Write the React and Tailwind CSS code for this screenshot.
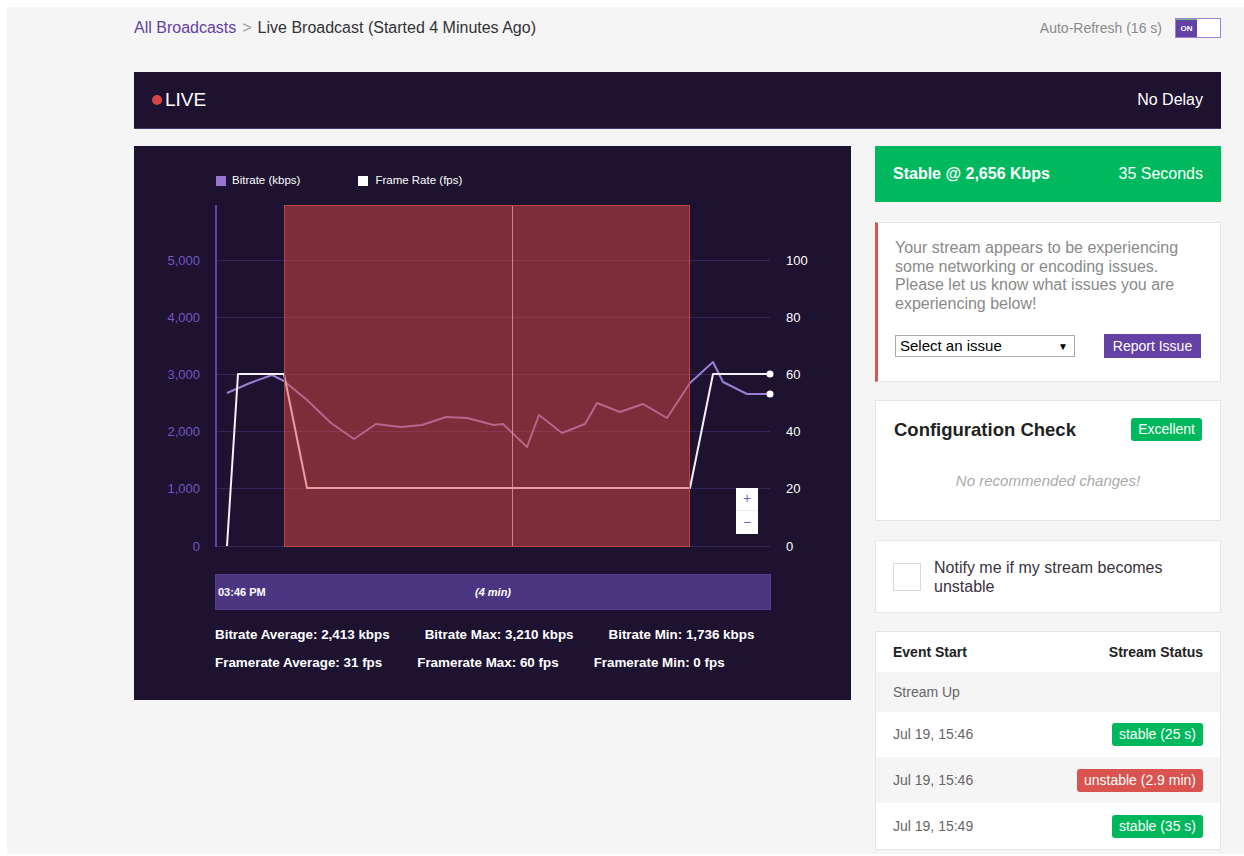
import React from 'react'

// chart coordinates are in px inside the 717x360 plot svg
const GRID_Y = [64, 121, 178, 235, 292, 350]
const LEFT_TICKS = ['5,000', '4,000', '3,000', '2,000', '1,000', '0']
const RIGHT_TICKS = ['100', '80', '60', '40', '20', '0']

const FRAMERATE = [
  [93, 350], [104, 178], [150, 178], [173, 292], [556, 292], [579, 178], [636, 178],
]

const BITRATE = [
  [93, 197], [116, 187], [138, 179], [150, 185], [173, 204], [197, 227], [220, 243],
  [242, 228], [267, 231], [288, 229], [312, 221], [333, 222], [360, 229], [369, 228],
  [393, 251], [405, 219], [428, 237], [451, 228], [463, 207], [486, 216], [509, 208],
  [533, 222], [556, 187], [579, 166], [589, 186], [613, 198], [636, 198],
]

const STATS = [
  ['Bitrate Average: 2,413 kbps', 'Bitrate Max: 3,210 kbps', 'Bitrate Min: 1,736 kbps'],
  ['Framerate Average: 31 fps', 'Framerate Max: 60 fps', 'Framerate Min: 0 fps'],
]

const EVENTS = [
  { time: 'Jul 19, 15:46', label: 'stable (25 s)', ok: true, h: 'h-[45px]', bg: 'bg-white' },
  { time: 'Jul 19, 15:46', label: 'unstable (2.9 min)', ok: false, h: 'h-[46px]', bg: 'bg-[#f5f5f5]' },
  { time: 'Jul 19, 15:49', label: 'stable (35 s)', ok: true, h: 'h-[46px]', bg: 'bg-white' },
]

const pts = (arr) => arr.map((p) => p.join(',')).join(' ')

function Chart() {
  return (
    <svg width="717" height="360" className="block" style={{ fontFamily: '"Liberation Sans", Arial, sans-serif' }}>
      {/* grid */}
      {GRID_Y.map((y, i) => (
        <g key={y}>
          <line x1="82" x2="636" y1={y + 0.5} y2={y + 0.5} stroke="#34265a" strokeWidth="1" />
          <text x="66" y={y + 5} textAnchor="end" fontSize="13" fill="#7356c2">{LEFT_TICKS[i]}</text>
          <text x="652" y={y + 5} fontSize="13" fill="#ffffff">{RIGHT_TICKS[i]}</text>
        </g>
      ))}
      <line x1="82" x2="82" y1="9" y2="351" stroke="#6441a5" strokeWidth="2" />

      {/* series */}
      <polyline points={pts(BITRATE)} fill="none" stroke="#9b7dd4" strokeWidth="2" strokeLinejoin="round" />
      <polyline points={pts(FRAMERATE)} fill="none" stroke="#f4f1f8" strokeWidth="2" strokeLinejoin="round" />
      <circle cx="636" cy="178" r="3.5" fill="#ffffff" />
      <circle cx="636" cy="198" r="3.5" fill="#ffffff" />

      {/* unstable window */}
      <rect x="150.5" y="9.5" width="405" height="341" fill="#d94a43" fillOpacity="0.5" stroke="#c8474a" strokeOpacity="0.9" />
      <line x1="378.5" x2="378.5" y1="10" y2="350" stroke="#e49aa6" strokeOpacity="0.8" strokeWidth="1" />

      {/* zoom buttons */}
      <rect x="602" y="292" width="22" height="46" fill="#ffffff" />
      <line x1="602" x2="624" y1="314.5" y2="314.5" stroke="#ececec" />
      <text x="613" y="307" textAnchor="middle" fontSize="14" fill="#7c5cc4">+</text>
      <text x="613" y="331" textAnchor="middle" fontSize="14" fill="#7c5cc4">−</text>
    </svg>
  )
}

function Badge({ ok, children }) {
  return (
    <span
      className={`inline-flex items-center h-[23px] px-[7px] rounded-[3px] text-[14px] text-white ${ok ? 'bg-[#00b85c]' : 'bg-[#d9534f]'}`}
    >
      {children}
    </span>
  )
}

export default function App() {
  return (
    <div className="min-h-screen bg-white pt-[7px] pl-[7px] font-['Liberation_Sans',Arial,sans-serif]">
      <div className="h-[847px] bg-[#f5f5f5] pl-[127px] pt-[11px]">
        <div className="w-[1087px]">
          {/* Breadcrumb + refresh toggle */}
          <div className="flex items-center justify-between h-[20px]">
            <div className="text-[16px] leading-[20px]">
              <span className="text-[#6441a5]">All Broadcasts</span>
              <span className="text-[#999] mx-[6px]">&gt;</span>
              <span className="text-[#333]">Live Broadcast (Started 4 Minutes Ago)</span>
            </div>
            <div className="flex items-center gap-[13px]">
              <span className="text-[14px] text-[#8a8a8a]">Auto-Refresh (16 s)</span>
              <div className="flex w-[46px] h-[20px] border border-[#9b80d6] bg-white">
                <div className="w-[21px] bg-[#6441a5] border-t border-[#6fbf73] flex items-center justify-center text-[8px] font-bold text-white">
                  ON
                </div>
              </div>
            </div>
          </div>

          {/* Live bar */}
          <div className="mt-[34px] h-[57px] bg-[#1d1230] border-b border-[#47356b] flex items-center justify-between pl-[18px] pr-[18px]">
            <div className="flex items-center gap-[3px]">
              <span className="w-[10px] h-[10px] rounded-full bg-[#d9434a]" />
              <span className="text-[19px] text-white">LIVE</span>
            </div>
            <span className="text-[16px] text-white">No Delay</span>
          </div>

          <div className="flex gap-[24px] mt-[17px]">
            {/* Chart panel */}
            <div className="w-[717px] h-[554px] bg-[#1d1230] pt-[28px]">
              <div className="flex items-center pl-[82px] h-[14px] text-[11.5px] text-white">
                <span className="w-[10px] h-[10px] bg-[#9575cd] mr-[6px]" />
                <span>Bitrate (kbps)</span>
                <span className="w-[10px] h-[10px] bg-white ml-[58px] mr-[7px]" />
                <span>Frame Rate (fps)</span>
              </div>
              <div className="mt-[8px]">
                <Chart />
              </div>
              <div className="ml-[81px] mt-[18px] w-[556px] h-[36px] bg-[#4b3480] border border-[#563f8c] relative flex items-center px-[2px]">
                <span className="text-[11px] font-bold text-white">03:46 PM</span>
                <span className="absolute left-1/2 -translate-x-1/2 text-[11px] font-bold italic text-white">(4 min)</span>
              </div>
              <div className="pl-[81px] mt-[16px] flex flex-col gap-[10px]">
                {STATS.map((row, i) => (
                  <div key={i} className="flex gap-[35px] text-[13.4px] leading-[18px] font-bold text-white">
                    {row.map((s) => (
                      <span key={s}>{s}</span>
                    ))}
                  </div>
                ))}
              </div>
            </div>

            {/* Right column */}
            <div className="w-[346px] flex flex-col">
              <div className="h-[56px] bg-[#00b95f] flex items-center justify-between px-[18px] text-white">
                <span className="text-[16px] font-bold">Stable @ 2,656 Kbps</span>
                <span className="text-[16px]">35 Seconds</span>
              </div>

              <div className="mt-[20px] h-[160px] bg-white border border-[#e6e6e6] border-l-[3px] border-l-[#d9534f] pl-[17px] pr-[18px] pt-[16px]">
                <p className="text-[16px] leading-[18.6px] text-[#8a8a8a]">
                  Your stream appears to be experiencing some networking or encoding issues. Please let us know what issues
                  you are experiencing below!
                </p>
                <div className="mt-[21px] flex items-center justify-between pr-[1px]">
                  <div className="w-[180px] h-[22px] border border-[#a9a9a9] bg-white flex items-center justify-between pl-[4px] pr-[6px]">
                    <span className="text-[15px] text-black">Select an issue</span>
                    <span className="text-[10px] text-black">▼</span>
                  </div>
                  <div className="w-[97px] h-[24px] bg-[#6441a5] flex items-center justify-center text-[14px] text-white">
                    Report Issue
                  </div>
                </div>
              </div>

              <div className="mt-[18px] h-[121px] bg-white border border-[#e6e6e6] px-[18px] pt-[17px]">
                <div className="flex items-center justify-between h-[23px]">
                  <span className="text-[18.5px] font-bold text-[#222]">Configuration Check</span>
                  <Badge ok>Excellent</Badge>
                </div>
                <p className="mt-[29px] text-center text-[15px] italic text-[#aaa]">No recommended changes!</p>
              </div>

              <div className="mt-[19px] h-[73px] bg-white border border-[#e6e6e6] flex items-center gap-[13px] px-[17px]">
                <span className="w-[28px] h-[28px] shrink-0 border border-[#d9d9d9] bg-white" />
                <span className="text-[16px] leading-[19px] text-[#3a3340]">Notify me if my stream becomes unstable</span>
              </div>

              <div className="mt-[18px] bg-white border border-[#e6e6e6]">
                <div className="h-[40px] flex items-center justify-between px-[17px] text-[14px] font-bold text-[#222]">
                  <span>Event Start</span>
                  <span>Stream Status</span>
                </div>
                <div className="h-[40px] bg-[#f5f5f5] flex items-center px-[17px] text-[14px] text-[#666]">Stream Up</div>
                {EVENTS.map((e, i) => (
                  <div key={i} className={`${e.h} ${e.bg} flex items-center justify-between px-[17px]`}>
                    <span className="text-[14px] text-[#666]">{e.time}</span>
                    <Badge ok={e.ok}>{e.label}</Badge>
                  </div>
                ))}
              </div>
            </div>
          </div>
        </div>
      </div>
    </div>
  )
}
